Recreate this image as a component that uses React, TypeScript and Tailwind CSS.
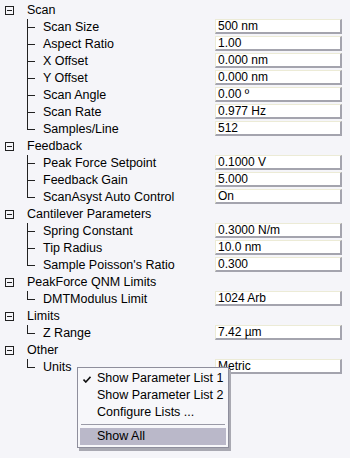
import React from "react";

type Param = { label: string; value: string };
type Group = { title: string; items: Param[] };

const groups: Group[] = [
  {
    title: "Scan",
    items: [
      { label: "Scan Size", value: "500 nm" },
      { label: "Aspect Ratio", value: "1.00" },
      { label: "X Offset", value: "0.000 nm" },
      { label: "Y Offset", value: "0.000 nm" },
      { label: "Scan Angle", value: "0.00 º" },
      { label: "Scan Rate", value: "0.977 Hz" },
      { label: "Samples/Line", value: "512" },
    ],
  },
  {
    title: "Feedback",
    items: [
      { label: "Peak Force Setpoint", value: "0.1000 V" },
      { label: "Feedback Gain", value: "5.000" },
      { label: "ScanAsyst Auto Control", value: "On" },
    ],
  },
  {
    title: "Cantilever Parameters",
    items: [
      { label: "Spring Constant", value: "0.3000 N/m" },
      { label: "Tip Radius", value: "10.0 nm" },
      { label: "Sample Poisson's Ratio", value: "0.300" },
    ],
  },
  {
    title: "PeakForce QNM Limits",
    items: [{ label: "DMTModulus Limit", value: "1024 Arb" }],
  },
  {
    title: "Limits",
    items: [{ label: "Z Range", value: "7.42 µm" }],
  },
  {
    title: "Other",
    items: [{ label: "Units", value: "Metric" }],
  },
];

const menuItems = ["Show Parameter List 1", "Show Parameter List 2", "Configure Lists ..."];

const CollapseBox = () => (
  <span className="relative ml-[5px] mr-[13px] block h-[9px] w-[9px] border border-[#222]">
    <span className="absolute left-[1px] right-[1px] top-[3px] h-px bg-[#222]" />
  </span>
);

const Branch = ({ last }: { last: boolean }) => (
  <span className="relative ml-[27px] mr-[8px] block h-full w-[8px]">
    <span
      className={`absolute left-0 top-0 w-px bg-[#222] ${last ? "h-[9px]" : "h-full"}`}
    />
    <span className="absolute left-0 top-[8px] h-px w-[8px] bg-[#222]" />
  </span>
);

const App = () => {
  return (
    <div
      className="relative h-[458px] w-[350px] overflow-hidden bg-[#f5f5f9] pt-[2px] text-[12.5px] text-black"
      style={{ fontFamily: '"Liberation Sans", Arial, sans-serif' }}
    >
      {groups.map((g) => (
        <div key={g.title}>
          <div className="flex h-[17px] items-center">
            <CollapseBox />
            <span className="leading-none">{g.title}</span>
          </div>
          {g.items.map((p, i) => (
            <div key={p.label} className="grid h-[17px] grid-cols-[215px_127px]">
              <div className="flex h-full items-center overflow-hidden whitespace-nowrap">
                <Branch last={i === g.items.length - 1} />
                <span className="leading-none">{p.label}</span>
              </div>
              <div className="flex h-[15px] items-center border-t border-l border-t-[#ecebd6] border-l-[#ecebd6] border-r-2 border-b-2 border-r-[#a4a4ae] border-b-[#a4a4ae] bg-white pl-[2px] text-[12px] leading-none">
                {p.value}
              </div>
            </div>
          ))}
        </div>
      ))}

      <div className="absolute left-[77px] top-[367px] w-[152px] border border-[#8e8e9c] bg-[#f7f7fa] py-[2px] shadow-[2px_3px_0_#a9a9b2]">
        {menuItems.map((m, i) => (
          <div key={m} className="relative flex h-[17px] items-center pl-[19px] leading-none">
            {i === 0 && (
              <svg
                className="absolute left-[5px] top-[6px]"
                width="8"
                height="7"
                viewBox="0 0 8 7"
              >
                <path d="M0.5 3.5 L2.8 6 L7.5 0.8" stroke="#111" strokeWidth="1.6" fill="none" />
              </svg>
            )}
            {m}
          </div>
        ))}
        <div className="mx-[3px] my-[3px] h-px bg-[#9a9aa6]" />
        <div className="mx-[2px] flex h-[17px] items-center bg-[#bab8c9] pl-[17px] leading-none">
          Show All
        </div>
      </div>
    </div>
  );
};

export default App;
